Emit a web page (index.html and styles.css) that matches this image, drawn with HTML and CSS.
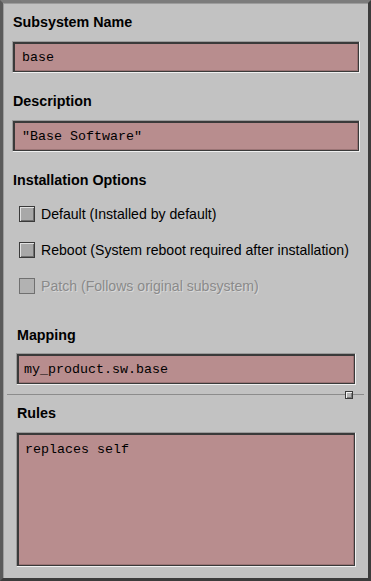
FILE: index.html
```html
<!DOCTYPE html>
<html>
<head>
    <title>Subsystem</title>
    <link rel="stylesheet" href="styles.css">
</head>
<body>
    <div class="frame">
        <div class="pane-top">
            <div class="label first">Subsystem Name</div>
            <div class="field">base</div>

            <div class="label">Description</div>
            <div class="field">"Base Software"</div>

            <div class="label">Installation Options</div>
            <div class="options">
                <div class="option"><span class="check"></span>Default (Installed by default)</div>
                <div class="option"><span class="check"></span>Reboot (System reboot required after installation)</div>
                <div class="option disabled"><span class="check"></span>Patch (Follows original subsystem)</div>
            </div>

            <div class="group">
                <div class="label mapping">Mapping</div>
                <div class="field">my_product.sw.base</div>
            </div>
        </div>

        <div class="sash">
            <span class="sash-handle"></span>
        </div>

        <div class="pane-bottom">
            <div class="label rules">Rules</div>
            <div class="field area">replaces self</div>
        </div>
    </div>
</body>
</html>
```

FILE: styles.css
```css
body {
    margin: 0;
    background: #c2c2c2;
}

.frame {
    box-sizing: border-box;
    width: 371px;
    height: 581px;
    background: #c2c2c2;
    border-top: 3px solid #7c7c7c;
    border-left: 3px solid #5a5a5a;
    border-right: 3px solid #3c3c3c;
    border-bottom: 3px solid #3c3c3c;
    box-shadow: inset 1px 1px 0 #9c9c9c;
    display: flex;
    flex-direction: column;
    font-family: "Liberation Sans", Arial, sans-serif;
    color: #000;
}

.pane-top {
    padding: 8px 8px 0 9px;
}

.label {
    height: 20px;
    line-height: 22px;
    font-size: 14.3px;
    font-weight: bold;
    margin: 17px 0 10px 1px;
}

.label.first {
    margin-top: 0;
}

.field {
    box-sizing: border-box;
    height: 32px;
    padding: 0 9px;
    line-height: 31px;
    background: #b88d8e;
    border: 1px solid;
    border-color: #9a9a9a #f0f0f0 #f0f0f0 #9a9a9a;
    box-shadow: inset 2px 2px 0 #3a3a3a, inset -1px -1px 0 #3a3a3a, inset -2px -2px 0 #9a7475;
    font-family: "Liberation Mono", "Courier New", monospace;
    font-size: 13.33px;
    white-space: pre;
}

.options {
    display: flex;
    flex-direction: column;
    gap: 16px;
    margin-top: 15px;
    padding-left: 7px;
}

.option {
    display: flex;
    align-items: center;
    gap: 6px;
    height: 20px;
    font-size: 14.1px;
    line-height: 22px;
}

.check {
    box-sizing: border-box;
    width: 16px;
    height: 16px;
    background: #a8a8a8;
    border: 1px solid #3a3a3a;
    box-shadow: inset 1px 1px 0 #e2e2e2, inset -1px -1px 0 #6e6e6e;
}

.option.disabled {
    color: #8a8a8a;
    text-shadow: 1px 1px 0 #d8d8d8;
}

.option.disabled .check {
    background: #b2b2b2;
    border-color: #707070;
    box-shadow: none;
}

.group {
    padding: 0 4px;
}

.group .field {
    padding: 0 7px;
}

.label.mapping {
    margin-top: 28px;
    margin-bottom: 9px;
}

.sash {
    position: relative;
    height: 1px;
    margin: 9px 4px 0 4px;
    background: #8c8c8c;
}

.sash-handle {
    position: absolute;
    left: 338px;
    top: -3px;
    box-sizing: border-box;
    width: 8px;
    height: 8px;
    background: #b4b4b4;
    border: 1px solid #3a3a3a;
    box-shadow: inset 1px 1px 0 #f4f4f4, inset -1px -1px 0 #7a7a7a;
}

.pane-bottom {
    flex: 1;
    display: flex;
    flex-direction: column;
    padding: 0 12px 11px 13px;
}

.label.rules {
    margin-top: 7px;
}

.field.area {
    flex: 1;
    padding-top: 3px;
    padding-left: 8px;
    line-height: 28px;
}
```
